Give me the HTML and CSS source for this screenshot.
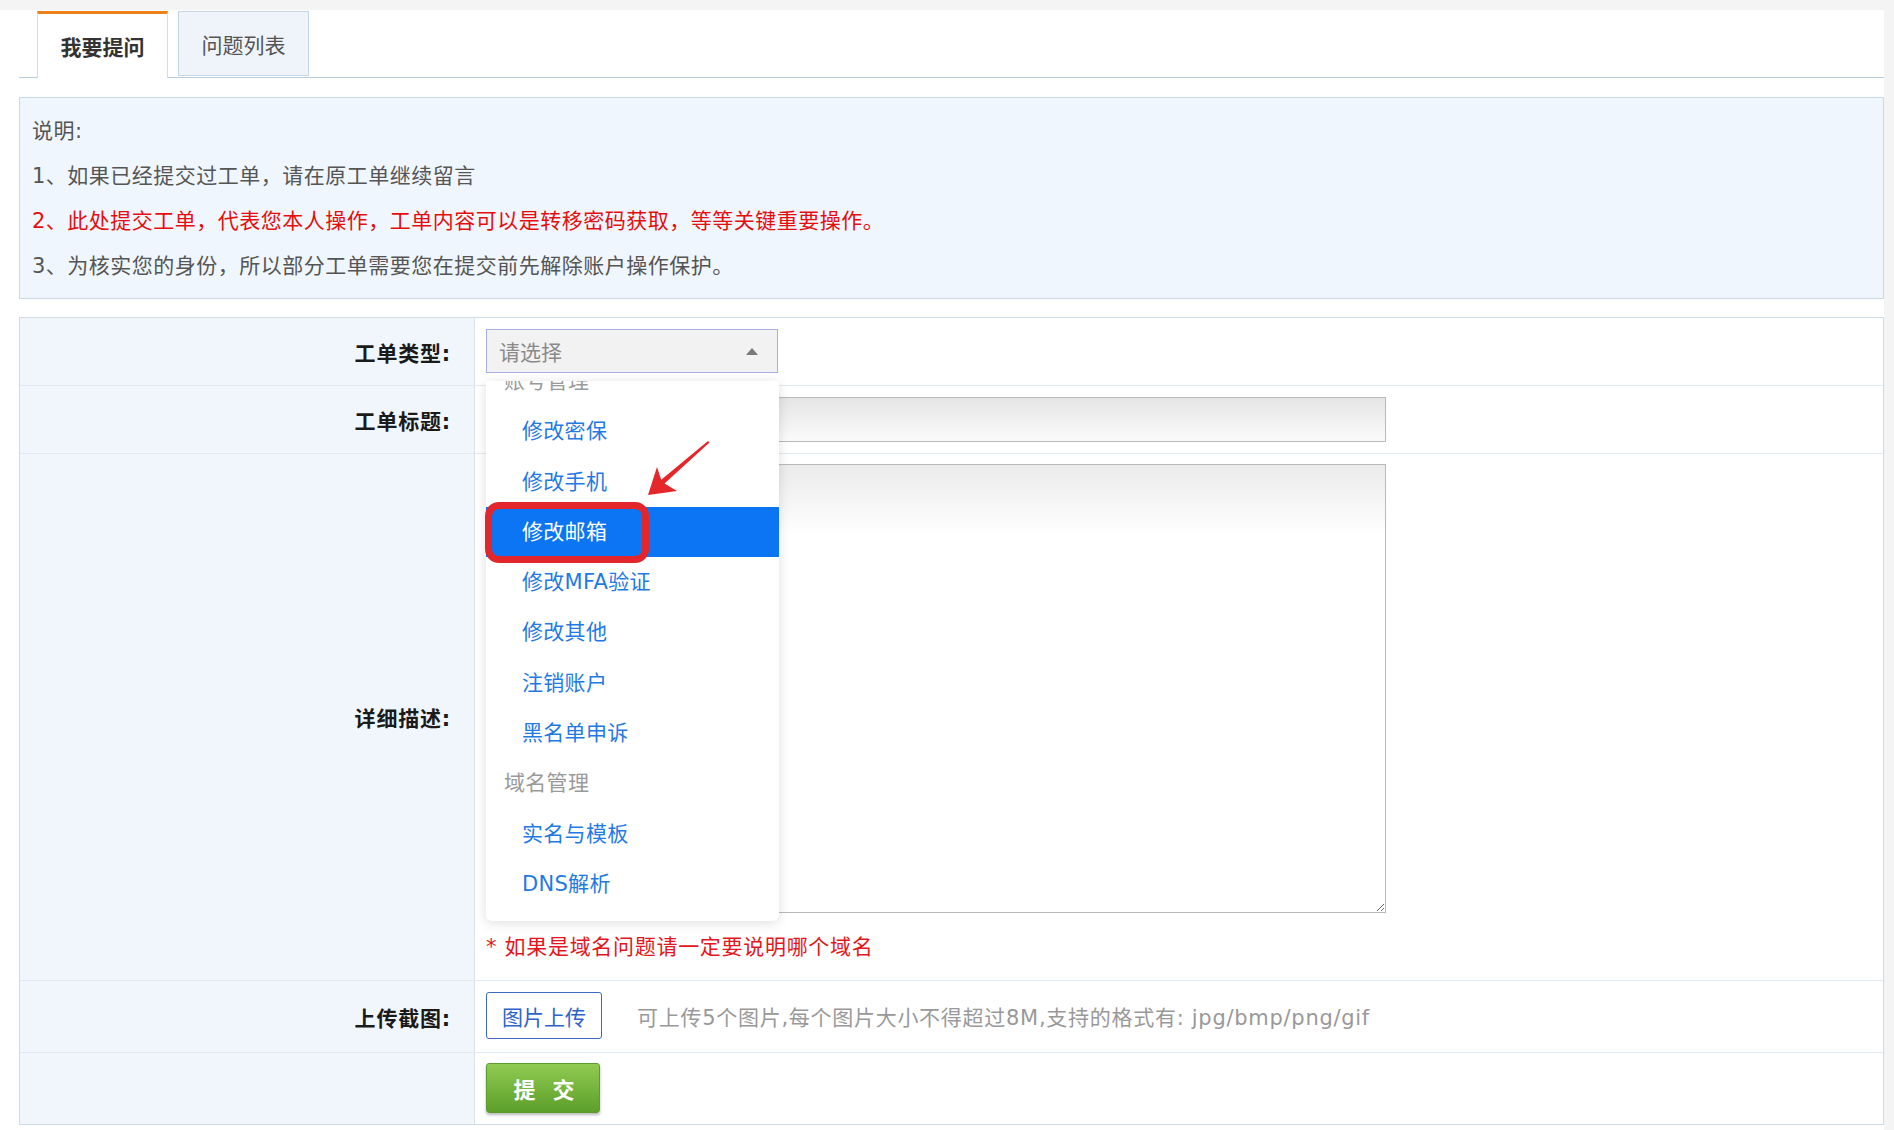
FILE: index.html
```html
<!DOCTYPE html>
<html lang="zh-CN">
<head>
<meta charset="utf-8">
<title>工单</title>
<link rel="stylesheet" href="styles.css">
</head>
<body>
<div class="page">
  <div class="tabs">
    <div class="tab tab-active">我要提问</div>
    <div class="tab tab-idle">问题列表</div>
  </div>

  <div class="notice">
    <p>说明:</p>
    <p>1、如果已经提交过工单，请在原工单继续留言</p>
    <p class="warn">2、此处提交工单，代表您本人操作，工单内容可以是转移密码获取，等等关键重要操作。</p>
    <p>3、为核实您的身份，所以部分工单需要您在提交前先解除账户操作保护。</p>
  </div>

  <div class="form">
    <div class="row">
      <div class="label">工单类型:</div>
      <div class="cell cell-type">
        <div class="select-wrap">
          <div class="select"><span>请选择</span><span class="caret"></span></div>
          <div class="dropdown">
            <ul class="opt-list">
              <li class="opt group">账号管理</li>
              <li class="opt">修改密保</li>
              <li class="opt">修改手机</li>
              <li class="opt selected">修改邮箱</li>
              <li class="opt">修改MFA验证</li>
              <li class="opt">修改其他</li>
              <li class="opt">注销账户</li>
              <li class="opt">黑名单申诉</li>
              <li class="opt group">域名管理</li>
              <li class="opt">实名与模板</li>
              <li class="opt">DNS解析</li>
            </ul>
          </div>
          <div class="mark"></div>
          <svg class="arrow" viewBox="0 0 90 80" width="90" height="80">
            <polygon points="18,65 47,61 34.5,53.5 79.5,12.6 78,11 31.2,49.8 27,37" fill="#e5262b"/>
          </svg>
        </div>
      </div>
    </div>
    <div class="row">
      <div class="label">工单标题:</div>
      <div class="cell cell-title"><input class="text-input" type="text"></div>
    </div>
    <div class="row">
      <div class="label">详细描述:</div>
      <div class="cell cell-desc">
        <textarea class="text-area"></textarea>
        <div class="hint-red">* 如果是域名问题请一定要说明哪个域名</div>
      </div>
    </div>
    <div class="row">
      <div class="label">上传截图:</div>
      <div class="cell cell-upload">
        <button class="upload-btn" type="button">图片上传</button>
        <span class="upload-hint">可上传5个图片,每个图片大小不得超过8M,支持的格式有: jpg/bmp/png/gif</span>
      </div>
    </div>
    <div class="row">
      <div class="label"></div>
      <div class="cell cell-submit"><button class="submit-btn" type="button">提 交</button></div>
    </div>
  </div>
</div>
</body>
</html>
```
FILE: styles.css
```css
* { box-sizing: border-box; }
html, body { margin: 0; padding: 0; }
body {
  background: #f4f4f4;
  font-family: "DejaVu Sans", "Noto Sans CJK SC", sans-serif;
  font-size: 21px;
  color: #555;
}
.page {
  margin-top: 10px;
  width: 1884px;
  min-height: 1120px;
  background: #fff;
  padding-left: 19px;
}

/* tabs */
.tabs {
  display: flex;
  align-items: flex-start;
  gap: 10px;
  padding: 1px 0 0 18px;
  border-bottom: 1px solid #b7ccd9;
}
.tab {
  width: 131px;
  display: flex;
  align-items: center;
  justify-content: center;
  font-family: "Noto Sans CJK SC", sans-serif;
  font-size: 21px;
}
.tab-active {
  height: 67px;
  margin-bottom: -1px;
  background: #fff;
  border-top: 3px solid #f0801c;
  border-left: 1px solid #d3dee8;
  border-right: 1px solid #d3dee8;
  font-weight: bold;
  color: #333;
}
.tab-idle {
  height: 65px;
  background: #eff4fa;
  border: 1px solid #c4d5e5;
  color: #555;
}

/* notice */
.notice {
  margin-top: 19px;
  background: #f0f6fd;
  border: 1px solid #cad9e6;
  padding: 11px 12px 9px;
  line-height: 45px;
  letter-spacing: .5px;
  color: #555;
}
.notice p { margin: 0; }
.notice .warn { color: #e60d0d; }

/* form */
.form {
  margin-top: 18px;
  border: 1px solid #cfdbe7;
}
.row {
  display: grid;
  grid-template-columns: 455px 1fr;
  border-bottom: 1px solid #e1e9f1;
}
.row:last-child { border-bottom: 0; }
.label {
  background: #f1f6fd;
  border-right: 1px solid #d8e3ee;
  display: flex;
  align-items: center;
  justify-content: flex-end;
  padding-right: 23px;
  font-weight: bold;
  color: #1a1a1a;
  letter-spacing: .8px;
}
.cell { padding: 11px 11px 12px; }
.cell-title { padding: 11px 11px 11px; }
.cell-desc { padding: 10px 11px 18px; }
.cell-upload {
  padding: 11px 11px 13px;
  display: flex;
  align-items: center;
  gap: 35px;
}
.cell-submit { padding: 10px 11px 11px; }

/* select */
.select-wrap { position: relative; width: 292px; }
.select {
  height: 44px;
  border: 1px solid #a7aee6;
  background: #f2f2f2;
  display: flex;
  align-items: center;
  justify-content: space-between;
  padding: 0 19px 0 12px;
  color: #8a8a8a;
  font-family: "Noto Sans CJK SC", sans-serif;
}
.caret {
  width: 0;
  height: 0;
  border-left: 6px solid transparent;
  border-right: 6px solid transparent;
  border-bottom: 7px solid #7a7a7a;
}
.dropdown {
  position: absolute;
  left: 0;
  top: 52px;
  width: 293px;
  height: 540px;
  background: #fff;
  border-radius: 0 0 6px 6px;
  box-shadow: 0 2px 12px rgba(0, 0, 0, .13);
  overflow: hidden;
  z-index: 5;
}
.opt-list {
  margin: -25px 0 0;
  padding: 0;
  list-style: none;
}
.opt {
  height: 50.3px;
  line-height: 50.3px;
  padding-left: 36px;
  color: #1f7ae3;
  white-space: nowrap;
  letter-spacing: .3px;
}
.opt.group { padding-left: 18px; color: #9a9a9a; }
.opt.selected { background: #0b75f4; color: #fff; }
.mark {
  position: absolute;
  left: -1px;
  top: 173px;
  width: 164px;
  height: 61px;
  border: 7px solid #e3262b;
  border-radius: 14px;
  z-index: 6;
}
.arrow {
  position: absolute;
  left: 144px;
  top: 101px;
  z-index: 6;
}

/* inputs */
.text-input {
  display: block;
  width: 900px;
  height: 45px;
  margin: 0;
  border: 1px solid #b9b9b9;
  background: linear-gradient(#e5e5e5, #fbfbfb);
}
.text-area {
  display: block;
  width: 900px;
  height: 449px;
  margin: 0;
  padding: 0;
  border: 1px solid #b9b9b9;
  background: linear-gradient(#ebebeb 0, #fff 70px);
  font: inherit;
  resize: both;
}
.hint-red {
  margin-top: 19px;
  line-height: 30px;
  color: #e3161b;
  letter-spacing: .7px;
}

/* upload */
.upload-btn {
  width: 116px;
  height: 47px;
  margin: 0;
  padding: 0;
  background: #fff;
  border: 1px solid #3a69c6;
  border-radius: 3px;
  color: #2d64cc;
  font-family: "Noto Sans CJK SC", sans-serif;
  font-size: 21px;
}
.upload-hint {
  color: #999;
  letter-spacing: .72px;
  white-space: nowrap;
}

/* submit */
.submit-btn {
  width: 114px;
  height: 50px;
  margin: 0;
  padding: 0 0 0 8px;
  border: 1px solid #5c9c2e;
  border-radius: 3px;
  background: linear-gradient(#90cb52, #5c9f2a);
  box-shadow: 0 2px 3px rgba(0, 0, 0, .28);
  color: #fff;
  font-family: "Noto Sans CJK SC", sans-serif;
  font-size: 22px;
  font-weight: bold;
  letter-spacing: 6px;
}
```
